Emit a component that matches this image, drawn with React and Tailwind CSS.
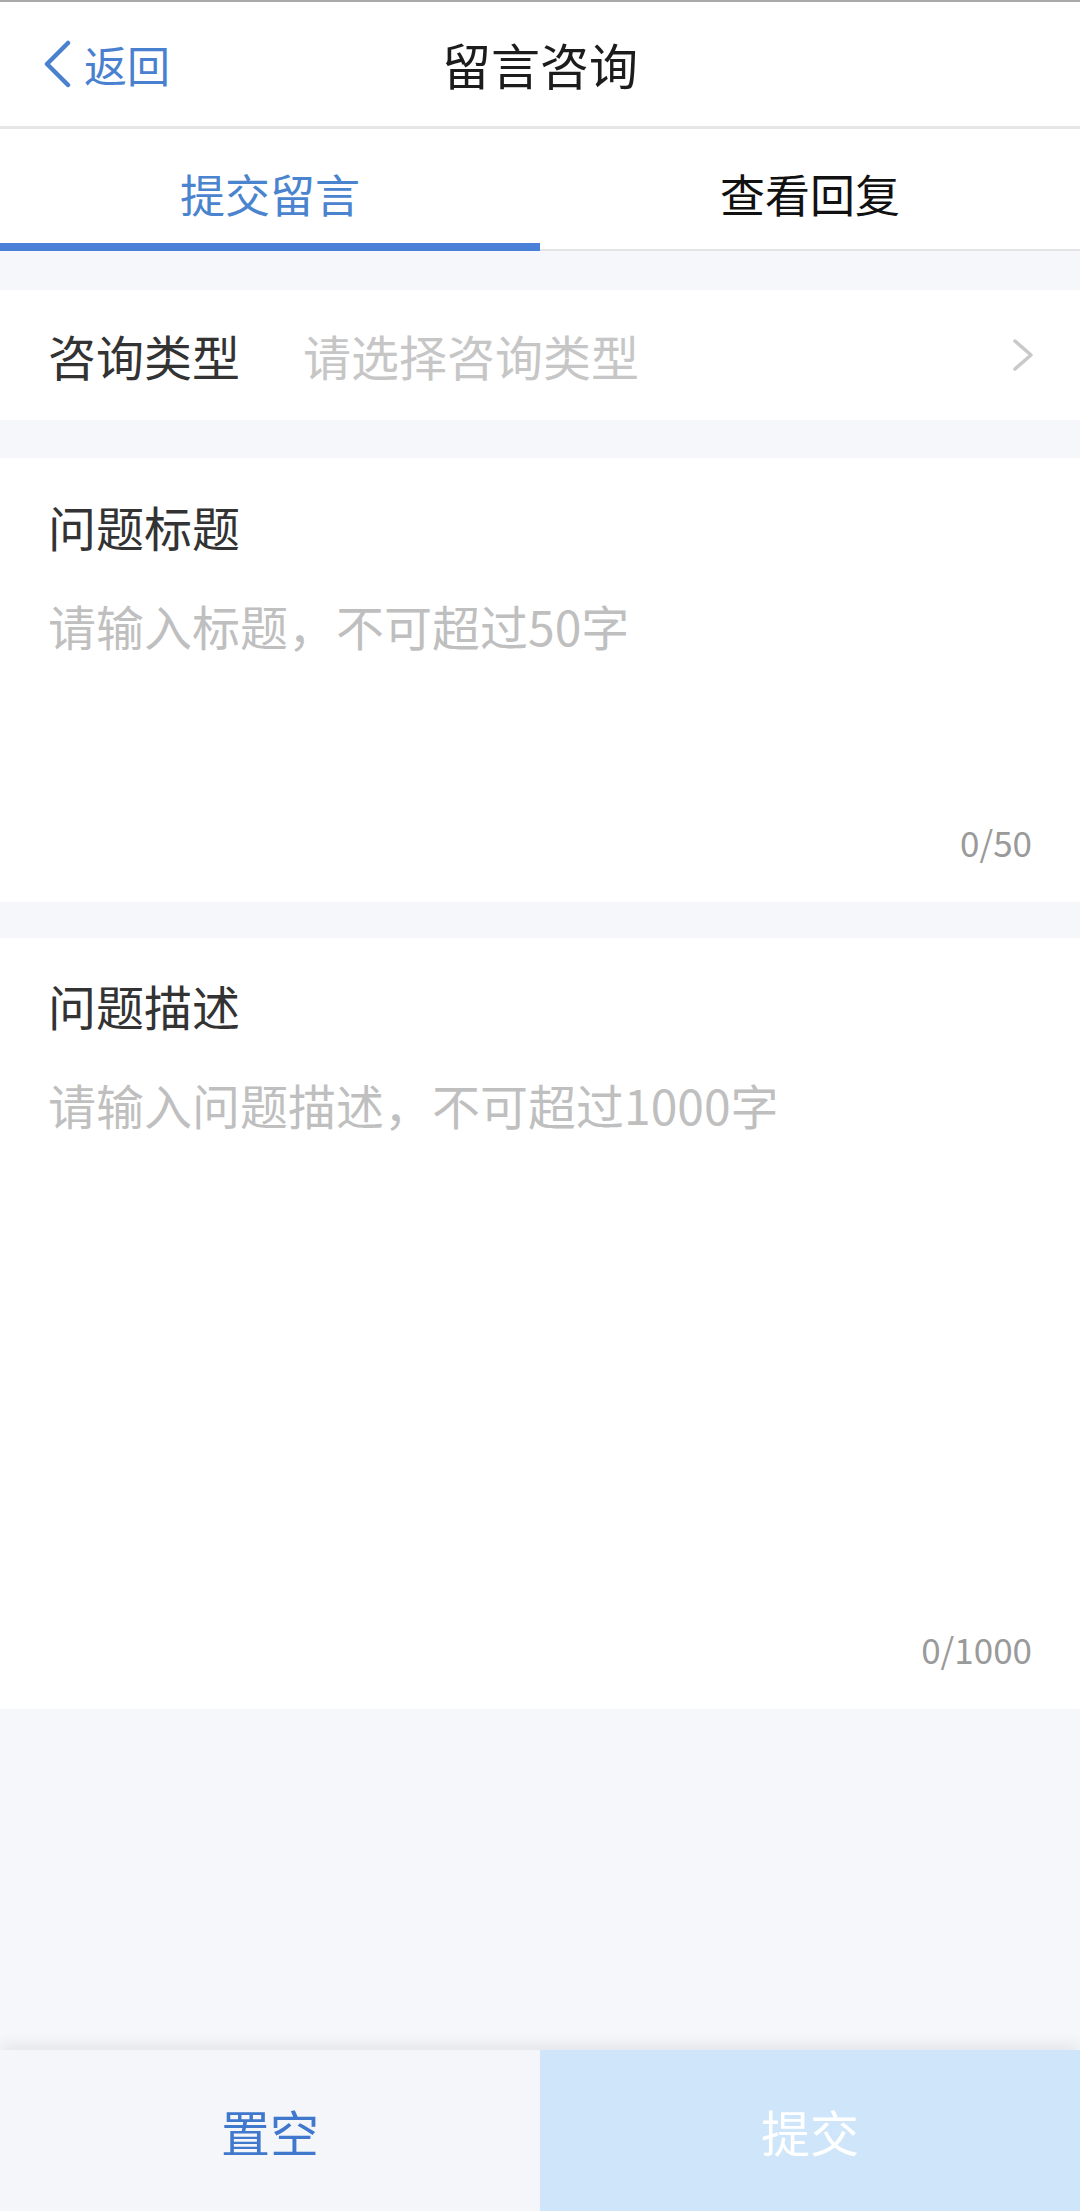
import React from "react";

const CJK = "font-['Noto_Sans_CJK_SC','Noto_Sans',sans-serif]";

function BackChevron() {
  return (
    <svg width="28" height="48" viewBox="0 0 28 48" fill="none">
      <polyline points="24,3 3,24 24,45" stroke="#4a80d0" strokeWidth="4.5" strokeLinecap="round" strokeLinejoin="round" />
    </svg>
  );
}

function RightChevron() {
  return (
    <svg width="22" height="34" viewBox="0 0 22 34" fill="none">
      <polyline points="3,3 19,17 3,31" stroke="#c9c9c9" strokeWidth="3.5" strokeLinecap="round" strokeLinejoin="round" />
    </svg>
  );
}

export default function App() {
  return (
    <div className={`w-[1080px] h-[2211px] flex flex-col bg-[#f6f7fa] ${CJK}`}>
      {/* top hairline */}
      <div className="h-[2px] bg-[#a9a9a9]" />

      {/* header */}
      <div className="relative h-[127px] bg-white border-b-[3px] border-[#e6e6e8] flex items-center justify-center">
        <div className="absolute left-[44px] top-0 h-full flex items-center gap-[12px]">
          <BackChevron />
          <span className="text-[43px] leading-[52px] text-[#4a80d0]">返回</span>
        </div>
        <span className="text-[49px] leading-[60px] text-[#1c1c1c]">留言咨询</span>
      </div>

      {/* tabs */}
      <div className="h-[122px] bg-white flex">
        <div className="flex-1 flex items-center justify-center pt-[16px] border-b-[8px] border-[#4a80d8]">
          <span className="text-[45px] leading-[56px] text-[#4a84cf]">提交留言</span>
        </div>
        <div className="flex-1 flex items-center justify-center pt-[10px] border-b-[2px] border-[#e4e4e6]">
          <span className="text-[45px] leading-[56px] text-[#111111]">查看回复</span>
        </div>
      </div>

      <div className="h-[39px]" />

      {/* consult type row */}
      <div className="h-[130px] bg-white flex items-center pl-[48px] pr-[46px]">
        <span className="w-[255px] text-[48px] leading-[58px] text-[#333333]">咨询类型</span>
        <span className="flex-1 text-[48px] leading-[58px] text-[#c6c6c6]">请选择咨询类型</span>
        <RightChevron />
      </div>

      <div className="h-[38px]" />

      {/* question title */}
      <div className="h-[444px] bg-white flex flex-col px-[48px] pt-[39px] pb-[39px]">
        <span className="text-[48px] leading-[58px] text-[#333333]">问题标题</span>
        <span className="mt-[41px] text-[48px] leading-[58px] text-[#bfbfbf]">请输入标题，不可超过50字</span>
        <div className="flex-1" />
        <span className="self-end text-[35px] leading-[42px] text-[#9a9a9a]">0/50</span>
      </div>

      <div className="h-[36px]" />

      {/* question description */}
      <div className="h-[771px] bg-white flex flex-col px-[48px] pt-[38px] pb-[39px]">
        <span className="text-[48px] leading-[58px] text-[#333333]">问题描述</span>
        <span className="mt-[41px] text-[48px] leading-[58px] text-[#bfbfbf]">请输入问题描述，不可超过1000字</span>
        <div className="flex-1" />
        <span className="self-end text-[35px] leading-[42px] text-[#9a9a9a]">0/1000</span>
      </div>

      <div className="flex-1" />

      {/* bottom bar */}
      <div className="h-[161px] flex shadow-[0_-6px_14px_rgba(0,0,0,0.07)]">
        <div className="flex-1 bg-[#f5f6fa] flex items-center justify-center">
          <span className="text-[49px] leading-[60px] text-[#3f78cc]">置空</span>
        </div>
        <div className="flex-1 bg-[#cee5fa] flex items-center justify-center">
          <span className="text-[49px] leading-[60px] text-white">提交</span>
        </div>
      </div>
    </div>
  );
}
